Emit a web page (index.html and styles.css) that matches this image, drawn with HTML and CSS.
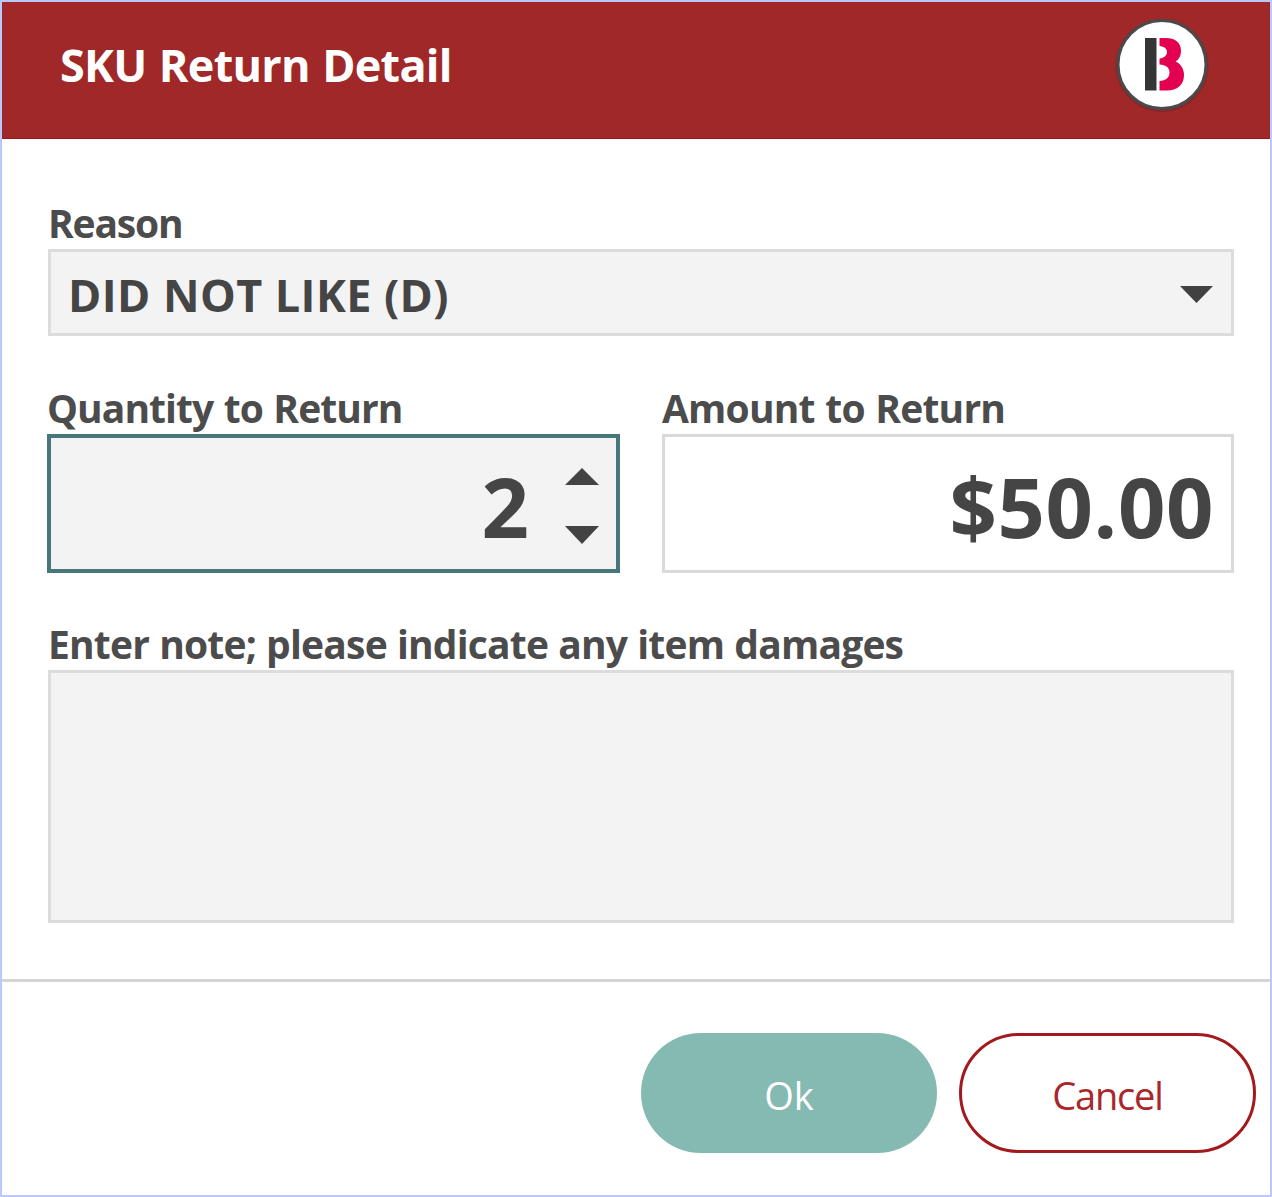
FILE: index.html
```html
<!DOCTYPE html>
<html lang="en">
<head>
<meta charset="utf-8">
<title>SKU Return Detail</title>
<link rel="stylesheet" href="styles.css">
</head>
<body>
<div class="dialog">
  <header class="header">
    <h1 class="title"><span>SKU Return Detail</span></h1>
    <svg class="logo" viewBox="0 0 100 100" aria-hidden="true">
      <circle cx="50" cy="50.5" r="46.5" fill="#6b2426" opacity=".45"/>
      <circle cx="50" cy="49.5" r="44" fill="#fff" stroke="#4b494b" stroke-width="3"/>
      <path d="M33 23h11.500v52.500H33z" fill="#343536"/>
      <path d="M47.500 23h6c9.500 0 15.500 4.500 15.500 12.500 0 5.500-2 9-5.500 11 5.500 2.500 8.500 7.500 8.500 13.500 0 10-7 15.500-17 15.500h-7.500v-9.500c6.500-.3 10-3.500 10-8.500s-3.500-7.500-10-8v-6c5-.5 7.500-3.500 7.500-6.500s-2.500-5.500-7.500-6z" fill="#e40050"/>
    </svg>
  </header>
  <main class="form">
    <section class="field">
      <div class="label"><span class="t-reason">Reason</span></div>
      <div class="control select">
        <span class="t-select">DID NOT LIKE (D)</span>
        <svg class="caret" viewBox="0 0 33 17"><path d="M0 0h33L16.500 17z"/></svg>
      </div>
    </section>
    <div class="row">
      <section class="field">
        <div class="label"><span class="t-quantity">Quantity to Return</span></div>
        <div class="control number focused">
          <span class="digits">2</span>
          <div class="spinner">
            <svg class="step" viewBox="0 0 34 17"><path d="M0 17h34L17 0z"/></svg>
            <svg class="step" viewBox="0 0 34 18"><path d="M0 0h34L17 18z"/></svg>
          </div>
        </div>
      </section>
      <section class="field">
        <div class="label"><span class="t-amount">Amount to Return</span></div>
        <div class="control number amount"><span class="digits t-money">$50.00</span></div>
      </section>
    </div>
    <section class="field">
      <div class="label"><span class="t-note">Enter note; please indicate any item damages</span></div>
      <div class="control note"></div>
    </section>
  </main>
  <footer class="footer">
    <button class="button ok"><span>Ok</span></button>
    <button class="button cancel"><span>Cancel</span></button>
  </footer>
</div>
</body>
</html>
```
FILE: styles.css
```css
* { box-sizing: border-box; }
body {
  margin: 0;
  font-family: "Open Sans", "Noto Sans", sans-serif;
  color: #454545;
}
.dialog {
  display: flex;
  flex-direction: column;
  height: 1197px;
  border: 2px solid #bbc8ff;
  background: #fff;
}
.header {
  display: flex;
  justify-content: space-between;
  align-items: flex-start;
  height: 137px;
  padding: 13px 58px 0 58px;
  background: #a02828;
  border-bottom: 1px solid #9b191b;
}
.title {
  margin: 20px 0 0;
  font-size: 45px;
  line-height: 60px;
  font-weight: 700;
  color: #fff;
  white-space: nowrap;
  letter-spacing: -0.75px;
  word-spacing: 1.5px;
}
.logo { width: 100px; height: 100px; }
.form {
  display: flex;
  flex-direction: column;
  gap: 47px;
  height: 840px;
  padding: 59px 36px 0 46px;
}
.label {
  height: 51px;
  padding-top: 1px;
  font-size: 39px;
  line-height: 48px;
  font-weight: 700;
  color: #4c4c4c;
  white-space: nowrap;
}
.t-reason { letter-spacing: -1.2px; }
.t-quantity { letter-spacing: -0.95px; word-spacing: 1.3px; }
.t-amount { letter-spacing: -0.8px; word-spacing: 1.2px; }
.t-note { letter-spacing: -0.8px; word-spacing: 0.7px; }
.control {
  display: flex;
  align-items: center;
  border: 3px solid #dcdcda;
  background: #f3f3f3;
  font-weight: 700;
  white-space: nowrap;
}
.select {
  justify-content: space-between;
  height: 87px;
  padding: 4px 18px 0 17px;
  font-size: 45px;
  line-height: 60px;
}
.t-select { letter-spacing: 0.42px; }
.caret { width: 33px; height: 17px; margin-bottom: 1px; fill: #414141; }
.row {
  display: grid;
  grid-template-columns: 573px 572px;
  gap: 42px;
  margin: 0 0 -1px -1px;
}
.number {
  justify-content: flex-end;
  height: 139px;
  font-size: 83px;
  line-height: 110px;
}
.digits { padding-top: 5px; }
.focused { border: 4px solid #47777a; padding-right: 17px; }
.spinner {
  display: flex;
  flex-direction: column;
  gap: 41px;
  margin: 5px 0 0 36px;
}
.step { display: block; width: 34px; fill: #434343; }
.t-money { letter-spacing: 0.6px; }
.amount { padding-right: 17px; background: #fff; border-color: #d9d9d9; }
.note { height: 253px; }
.footer {
  display: flex;
  justify-content: flex-end;
  gap: 22px;
  flex: 1;
  padding: 51px 14px 0 0;
  border-top: 3px solid #d5d5d5;
}
.button {
  height: 120px;
  padding: 4px 0 0;
  border: 0;
  border-radius: 60px;
  font: 400 38px/50px "Open Sans", "Noto Sans", sans-serif;
}
.ok { width: 296px; background: #84bab1; color: #fff; }
.cancel {
  width: 297px;
  border: 3px solid #a31a1e;
  background: #fff;
  color: #a9272b;
  letter-spacing: -1.2px;
}
```
